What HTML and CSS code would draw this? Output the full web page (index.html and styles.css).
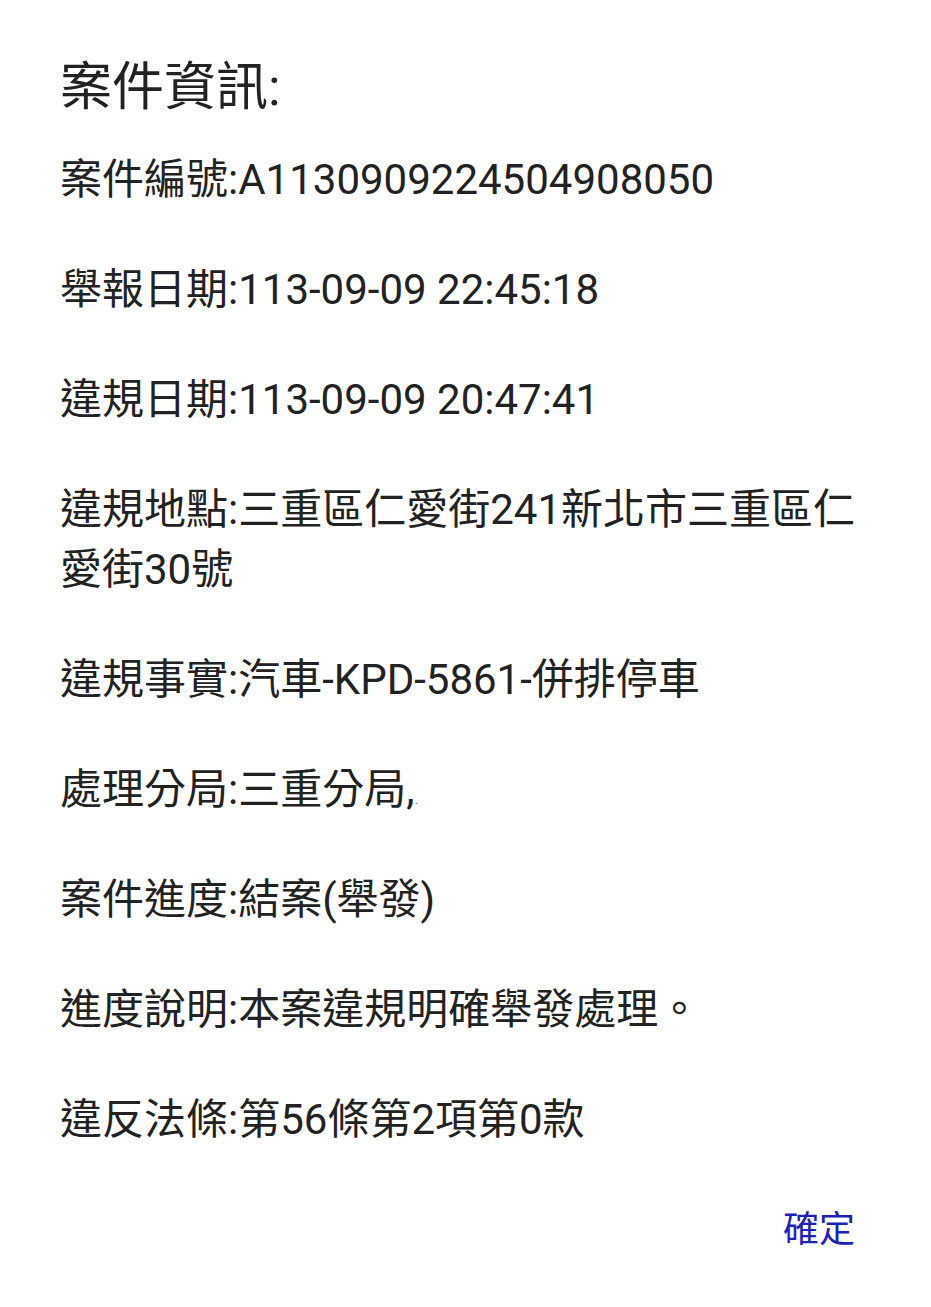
FILE: index.html
```html
<!DOCTYPE html>
<html lang="zh-Hant">
<head>
  <meta charset="UTF-8">
  <meta name="viewport" content="width=device-width, initial-scale=1.0">
  <title>案件資訊</title>
  <link rel="stylesheet" href="styles.css">
</head>
<body>
  <div class="dialog">
    <h1 class="titulo">案件資訊:</h1>
    <div class="campos">
      <p>案件編號:A1130909224504908050</p>
      <p>舉報日期:113-09-09 22:45:18</p>
      <p>違規日期:113-09-09 20:47:41</p>
      <p>違規地點:三重區仁愛街241新北市三重區仁愛街30號</p>
      <p>違規事實:汽車-KPD-5861-併排停車</p>
      <p>處理分局:三重分局,<span class="ponto">.</span></p>
      <p>案件進度:結案(舉發)</p>
      <p>進度說明:本案違規明確舉發處理。</p>
      <p>違反法條:第56條第2項第0款</p>
    </div>
    <div class="acoes">
      <button class="btn-ok">確定</button>
    </div>
  </div>
</body>
</html>
```

FILE: styles.css
```css
:root {
  --texto: #222222;
  --azul: #1e22b8;
  --branco: #ffffff;
}

body {
  margin: 0;
  background-color: var(--branco);
  font-family: Roboto, "Noto Sans CJK TC", sans-serif;
  color: var(--texto);
}

.dialog {
  padding: 58px 60px 0 60px;
}

.titulo {
  margin: 0 0 32px 0;
  font-size: 52px;
  font-weight: 400;
  line-height: 60px;
}

.campos p {
  margin: 0 0 50px 0;
  font-size: 42px;
  line-height: 60px;
}

.ponto {
  font-size: 14px;
  line-height: 0;
  color: #777;
}

.acoes {
  display: flex;
  justify-content: flex-end;
  margin-top: 35px;
  padding-right: 16px;
}

.btn-ok {
  border: none;
  background: none;
  padding: 0;
  font-family: Roboto, "Noto Sans CJK TC", sans-serif;
  font-size: 36px;
  line-height: 60px;
  color: var(--azul);
  cursor: pointer;
}
```
